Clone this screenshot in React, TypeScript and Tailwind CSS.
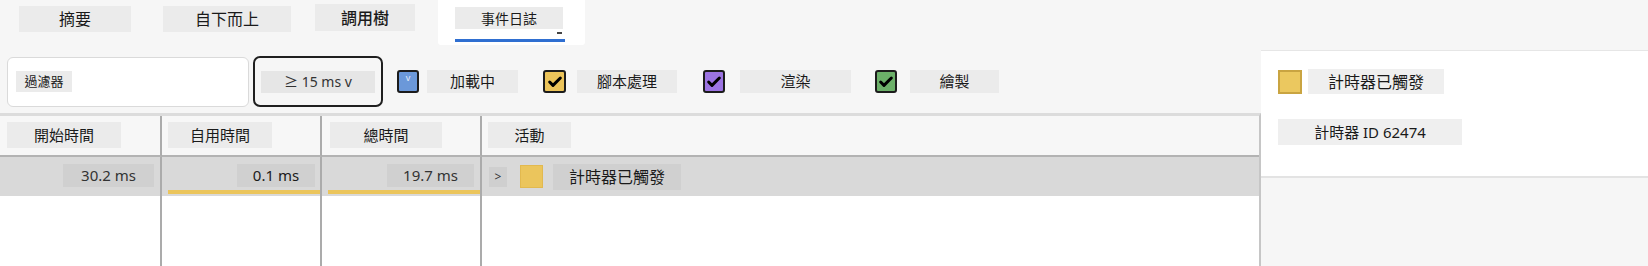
import { Check } from "lucide-react";

type Swatch = {
  label: string;
  color: string;
  gap: string;
  labelGap: string;
  labelWidth: string;
  boxWidth: string;
};

const categories: Swatch[] = [
  { label: "腳本處理", color: "bg-[#ecc45a]", gap: "ml-[25px]", labelGap: "ml-[11px]", labelWidth: "w-[100px]", boxWidth: "w-[23px]" },
  { label: "渲染", color: "bg-[#9c74e2]", gap: "ml-[26px]", labelGap: "ml-[15px]", labelWidth: "w-[111px]", boxWidth: "w-[22px]" },
  { label: "繪製", color: "bg-[#6cb069]", gap: "ml-[24px]", labelGap: "ml-[13px]", labelWidth: "w-[89px]", boxWidth: "w-[22px]" },
];

function CheckBox({ color, width }: { color: string; width: string }) {
  return (
    <div
      className={`${width} h-[23px] ${color} border-2 border-[#1c1c1c] rounded-[3px] flex items-center justify-center`}
    >
      <Check className="w-4 h-4 text-black" strokeWidth={4.5} />
    </div>
  );
}

function Label({ children, className = "" }: { children: React.ReactNode; className?: string }) {
  return (
    <div className={`flex items-center justify-center bg-[#ebebeb] ${className}`}>{children}</div>
  );
}

export default function App() {
  return (
    <div
      className="w-[1648px] h-[266px] bg-[#f6f6f6] flex flex-col overflow-hidden text-[#1a1a1a]"
      style={{ fontFamily: '"Noto Sans", "Noto Sans CJK TC", sans-serif' }}
    >
      {/* Tabs */}
      <div className="h-[50px] flex items-start shrink-0">
        <Label className="ml-[19px] mt-[6px] w-[112px] h-[26px] text-[16px]">摘要</Label>
        <Label className="ml-[32px] mt-[6px] w-[128px] h-[26px] text-[16px]">自下而上</Label>
        <Label className="ml-[24px] mt-[4px] w-[100px] h-[27px] text-[16px] font-medium">調用樹</Label>
        <div className="ml-[23px] w-[147px] h-[45px] bg-white rounded-b-[3px] flex flex-col">
          <div className="flex items-end ml-[17px] mt-[7px]">
            <Label className="w-[108px] h-[22px] text-[14px]">事件日誌</Label>
            <span className="block w-[5px] h-[2px] bg-[#444] ml-[-6px] mb-[-5px]"></span>
          </div>
          <div className="ml-[17px] mt-[10px] w-[110px] h-[3px] bg-[#2f6fd1]"></div>
        </div>
      </div>

      <div className="flex flex-1">
        {/* Left: toolbar + table */}
        <div className="w-[1261px] flex flex-col">
          <div className="h-[63px] flex items-center shrink-0">
            <div className="ml-[7px] w-[242px] h-[50px] bg-white border border-[#dadada] rounded-[6px] flex items-center">
              <Label className="ml-[8px] w-[56px] h-[21px] text-[13px]">過濾器</Label>
            </div>
            <div className="ml-[4px] w-[130px] h-[51px] border-2 border-[#1f1f1f] rounded-[7px] flex items-center justify-center">
              <div className="w-[114px] h-[22px] bg-[#e6e6e6] flex items-center justify-center text-[14px] text-[#333]">
                ≥ 15 ms v
              </div>
            </div>
            <div className="ml-[14px] w-[22px] h-[23px] bg-[#6b98d9] border-2 border-[#1c1c1c] rounded-[3px] flex justify-center">
              <span className="text-[9px] leading-[12px] text-[#e8eefa]">v</span>
            </div>
            <Label className="ml-[8px] w-[91px] h-[23px] text-[15px]">加載中</Label>
            {categories.map((c) => (
              <div key={c.label} className={`flex items-center ${c.gap}`}>
                <CheckBox color={c.color} width={c.boxWidth} />
                <Label className={`${c.labelGap} ${c.labelWidth} h-[23px] text-[15px]`}>{c.label}</Label>
              </div>
            ))}
          </div>

          {/* Table */}
          <div className="flex-1 bg-white border-t-[3px] border-[#dcdcdc] border-r-2 border-r-[#c6c6c6] grid grid-cols-[162px_160px_160px_1fr] grid-rows-[41px_39px_1fr]">
            {/* header */}
            <div className="bg-[#f7f7f7] border-r-2 border-[#ababab] border-b-2 border-b-[#b3b3b3] pl-[7px] pt-[6px]">
              <Label className="w-[114px] h-[26px] text-[15px]">開始時間</Label>
            </div>
            <div className="bg-[#f7f7f7] border-r-2 border-[#ababab] border-b-2 border-b-[#b3b3b3] pl-[6px] pt-[6px]">
              <Label className="w-[104px] h-[26px] text-[15px]">自用時間</Label>
            </div>
            <div className="bg-[#f7f7f7] border-r-2 border-[#ababab] border-b-2 border-b-[#b3b3b3] pl-[8px] pt-[6px]">
              <Label className="w-[112px] h-[26px] text-[15px]">總時間</Label>
            </div>
            <div className="bg-[#f7f7f7] border-b-2 border-[#b3b3b3] pl-[6px] pt-[6px]">
              <Label className="w-[83px] h-[26px] text-[15px]">活動</Label>
            </div>

            {/* data row */}
            <div className="bg-[#d9d9d9] border-r-2 border-[#ababab] flex flex-col items-end pt-[7px] pr-[6px]">
              <div className="w-[91px] h-[23px] bg-[#d0d0d0] flex items-center justify-center text-[15px] text-[#333]">30.2 ms</div>
            </div>
            <div className="bg-[#d9d9d9] border-r-2 border-[#ababab] flex flex-col items-end pt-[7px]">
              <div className="mr-[5px] w-[78px] h-[23px] bg-[#d0d0d0] flex items-center justify-center text-[15px]">0.1 ms</div>
              <div className="mt-[3px] w-[152px] h-[4px] bg-[#ebc55c]"></div>
            </div>
            <div className="bg-[#d9d9d9] border-r-2 border-[#ababab] flex flex-col items-end pt-[7px]">
              <div className="mr-[6px] w-[87px] h-[23px] bg-[#d0d0d0] flex items-center justify-center text-[15px] text-[#333]">19.7 ms</div>
              <div className="mt-[3px] w-[152px] h-[4px] bg-[#ebc55c]"></div>
            </div>
            <div className="bg-[#d9d9d9] flex items-center pl-[7px]">
              <div className="w-[18px] h-[20px] bg-[#cfcfcf] flex items-center justify-center text-[12px] text-[#333]">&gt;</div>
              <div className="ml-[13px] w-[23px] h-[23px] bg-[#ebc55c] border border-[#e2b94f]"></div>
              <div className="ml-[10px] w-[128px] h-[26px] bg-[#d0d0d0] flex items-center justify-center text-[16px]">計時器已觸發</div>
            </div>

            {/* empty body */}
            <div className="border-r-2 border-[#ababab]"></div>
            <div className="border-r-2 border-[#ababab]"></div>
            <div className="border-r-2 border-[#ababab]"></div>
            <div></div>
          </div>
        </div>

        {/* Right details panel */}
        <div className="flex-1 flex flex-col">
          <div className="h-[128px] bg-white border-t border-[#e6e6e6] border-b-2 border-b-[#e3e3e3] pl-[17px] pt-[18px]">
            <div className="flex items-center">
              <div className="w-[24px] h-[24px] bg-[#ebc85f] border-2 border-[#c9a441]"></div>
              <Label className="ml-[6px] w-[136px] h-[25px] bg-[#efefef] text-[16px]">計時器已觸發</Label>
            </div>
            <Label className="mt-[25px] w-[184px] h-[26px] bg-[#efefef] text-[15px]">計時器 ID 62474</Label>
          </div>
          <div className="flex-1 bg-[#f6f6f6]"></div>
        </div>
      </div>
    </div>
  );
}
